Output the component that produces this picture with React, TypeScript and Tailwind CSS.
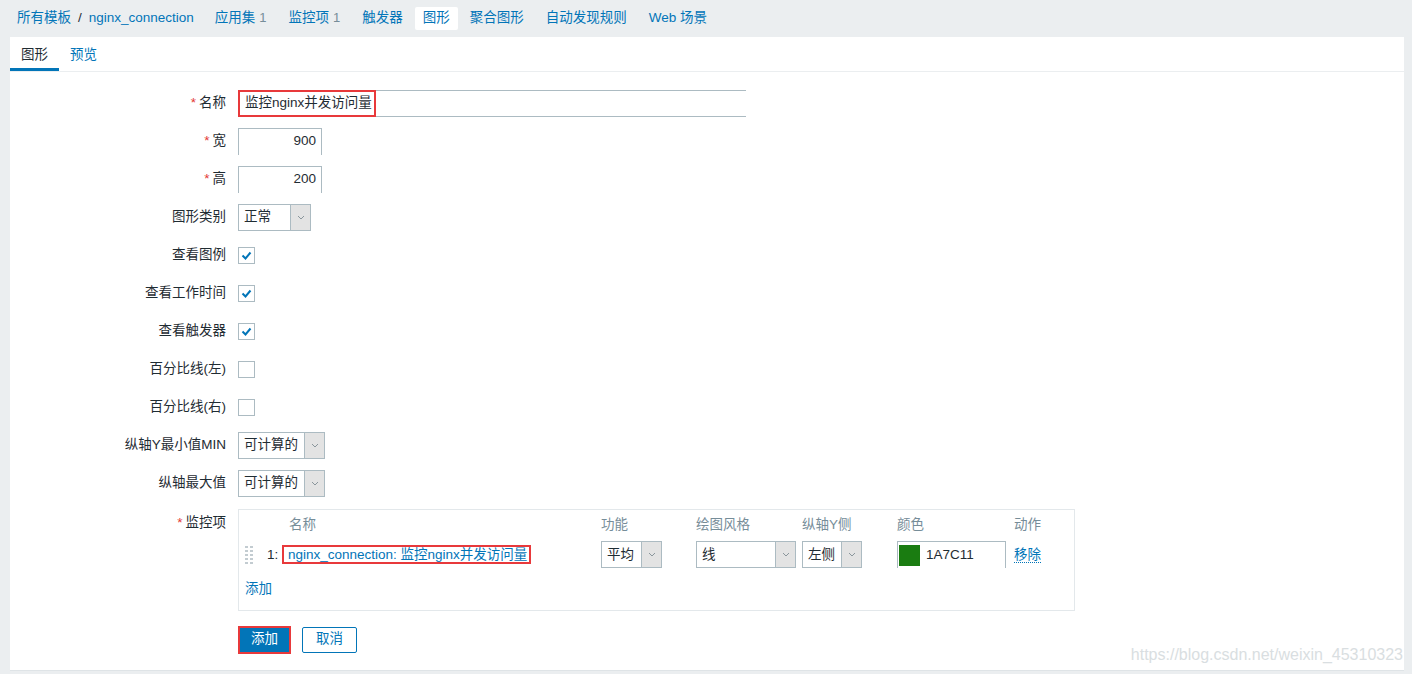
import React from "react";

const font = "font-['Liberation_Sans','Noto_Sans_CJK_SC',sans-serif]";

const navTabs = [
  { label: "应用集", count: "1" },
  { label: "监控项", count: "1" },
  { label: "触发器" },
  { label: "图形", active: true },
  { label: "聚合图形" },
  { label: "自动发现规则" },
  { label: "Web 场景" },
];

function Chevron() {
  return (
    <svg width="8" height="5" viewBox="0 0 8 5" fill="none">
      <path d="M1 1l3 3 3-3" stroke="#8a969c" strokeWidth="1" />
    </svg>
  );
}

function Select({ value, width }: { value: string; width: string }) {
  return (
    <div className={`flex h-[27px] ${width} border border-[#acbbc2] bg-white`}>
      <div className="flex flex-1 items-center pl-[5px] text-[#1f2c33]">{value}</div>
      <div className="flex w-[20px] items-center justify-center border-l border-[#acbbc2] bg-[#e3e3e3]">
        <Chevron />
      </div>
    </div>
  );
}

function Checkbox({ checked }: { checked?: boolean }) {
  return (
    <div className="flex h-[17px] w-[17px] items-center justify-center border border-[#acbbc2] bg-white">
      {checked && (
        <svg width="11" height="9" viewBox="0 0 11 9" fill="none">
          <path d="M1.5 4.5l3 3 5-6" stroke="#0275b8" strokeWidth="2" />
        </svg>
      )}
    </div>
  );
}

function Row({
  label,
  required,
  children,
}: {
  label: string;
  required?: boolean;
  children: React.ReactNode;
}) {
  return (
    <div className="flex h-[38px] items-center">
      <div className="w-[217px] pr-[1px] text-right text-[#1f2c33]">
        {required && <span className="mr-[3px] text-[#e33734]">*</span>}
        {label}
      </div>
      <div className="ml-[11px] flex items-center">{children}</div>
    </div>
  );
}

function DragHandle() {
  return (
    <div className="inline-grid grid-cols-[3px_3px] gap-x-[2px] gap-y-[2px]">
      {Array.from({ length: 10 }).map((_, i) => (
        <div key={i} className="h-[2px] w-[3px] bg-[#c3ccd1]" />
      ))}
    </div>
  );
}

export default function App() {
  return (
    <div className={`relative h-[674px] w-full bg-[#ebeef0] text-[13.5px] ${font}`}>
      {/* Top navigation */}
      <div className="flex h-[37px] items-center pl-[17px]">
        <span className="text-[#0275b8]">所有模板</span>
        <span className="mx-[7px] text-[#1f2c33]">/</span>
        <span className="mr-[10px] text-[#0275b8]">nginx_connection</span>
        {navTabs.map((t) =>
          t.active ? (
            <span
              key={t.label}
              className="mx-[1px] flex h-[23px] items-center rounded-[2px] bg-white px-[8px] text-[#0275b8]"
            >
              {t.label}
            </span>
          ) : (
            <span key={t.label} className="px-[11px] text-[#0275b8]">
              {t.label}
              {t.count && <span className="ml-[4px] text-[13px] text-[#768d99]">{t.count}</span>}
            </span>
          )
        )}
      </div>

      {/* Panel */}
      <div className="ml-[10px] mr-[8px] h-[634px] border-b border-[#dfe4e7] bg-white">
        <div className="flex h-[35px] border-b border-[#ebeef0]">
          <div className="flex items-center border-b-[3px] border-[#0275b8] px-[11px] pt-[5px] text-[#1f2c33]">
            图形
          </div>
          <div className="flex items-center px-[11px] pt-[2px] text-[#0275b8]">预览</div>
        </div>

        <div className="pt-[12px]">
          <Row label="名称" required>
            <div className="flex h-[27px] w-[508px] items-center border-y border-[#acbbc2]">
              <span className="flex h-[27px] items-center border-2 border-[#e8393b] pl-[5px] pr-[2px] text-[#1f2c33]">
                监控nginx并发访问量
              </span>
            </div>
          </Row>
          <Row label="宽" required>
            <div className="flex h-[27px] w-[84px] items-center justify-end border border-b-0 border-[#acbbc2] pr-[5px] text-[#1f2c33]">
              900
            </div>
          </Row>
          <Row label="高" required>
            <div className="flex h-[27px] w-[84px] items-center justify-end border border-b-0 border-[#acbbc2] pr-[5px] text-[#1f2c33]">
              200
            </div>
          </Row>
          <Row label="图形类别">
            <Select value="正常" width="w-[73px]" />
          </Row>
          <Row label="查看图例">
            <Checkbox checked />
          </Row>
          <Row label="查看工作时间">
            <Checkbox checked />
          </Row>
          <Row label="查看触发器">
            <Checkbox checked />
          </Row>
          <Row label="百分比线(左)">
            <Checkbox />
          </Row>
          <Row label="百分比线(右)">
            <Checkbox />
          </Row>
          <Row label="纵轴Y最小值MIN">
            <Select value="可计算的" width="w-[87px]" />
          </Row>
          <Row label="纵轴最大值">
            <Select value="可计算的" width="w-[87px]" />
          </Row>

          {/* Items */}
          <div className="flex pt-[7px]">
            <div className="w-[217px] pr-[1px] pt-[4px] text-right text-[#1f2c33]">
              <span className="mr-[3px] text-[#e33734]">*</span>监控项
            </div>
            <div className="ml-[11px] w-[837px] border border-[#e3e8eb] pb-[10px] pl-[5px] pt-[5px]">
              <div className="grid grid-cols-[23px_15px_319px_95px_106px_95px_117px_1fr] text-[#768d99]">
                <div />
                <div />
                <div className="pl-[7px]">名称</div>
                <div>功能</div>
                <div>绘图风格</div>
                <div>纵轴Y侧</div>
                <div>颜色</div>
                <div>动作</div>
              </div>
              <div className="mt-[6px] grid grid-cols-[23px_15px_319px_95px_106px_95px_117px_1fr] items-center">
                <div className="flex pl-[1px]">
                  <DragHandle />
                </div>
                <div className="text-[#1f2c33]">1:</div>
                <div>
                  <span className="inline-flex h-[19px] w-[249px] items-center border-2 border-[#e8393b] pl-[4px] text-[#0275b8]">
                    nginx_connection: 监控nginx并发访问量
                  </span>
                </div>
                <div>
                  <Select value="平均" width="w-[61px]" />
                </div>
                <div>
                  <Select value="线" width="w-[100px]" />
                </div>
                <div>
                  <Select value="左侧" width="w-[60px]" />
                </div>
                <div>
                  <div className="flex h-[27px] w-[109px] items-center border border-b-0 border-[#acbbc2] pl-[1px]">
                    <div className="h-[21px] w-[21px] bg-[#1a7c11]" />
                    <span className="ml-[6px] text-[#1f2c33]">1A7C11</span>
                  </div>
                </div>
                <div>
                  <span className="border-b border-dotted border-[#0275b8] text-[#0275b8]">移除</span>
                </div>
              </div>
              <div className="mt-[11px] pl-[1px] text-[#0275b8]">添加</div>
            </div>
          </div>

          {/* Buttons */}
          <div className="ml-[228px] mt-[15px] flex items-center gap-[11px]">
            <button className="h-[28px] w-[53px] border-2 border-[#e8393b] bg-[#0275b8] text-white">
              添加
            </button>
            <button className="h-[26px] w-[55px] rounded-[2px] border border-[#0275b8] bg-white text-[#0275b8]">
              取消
            </button>
          </div>
        </div>
      </div>

      <div className="absolute bottom-[7px] right-[9px] text-[16px] text-[#d9dee1]">
        https://blog.csdn.net/weixin_45310323
      </div>
    </div>
  );
}
